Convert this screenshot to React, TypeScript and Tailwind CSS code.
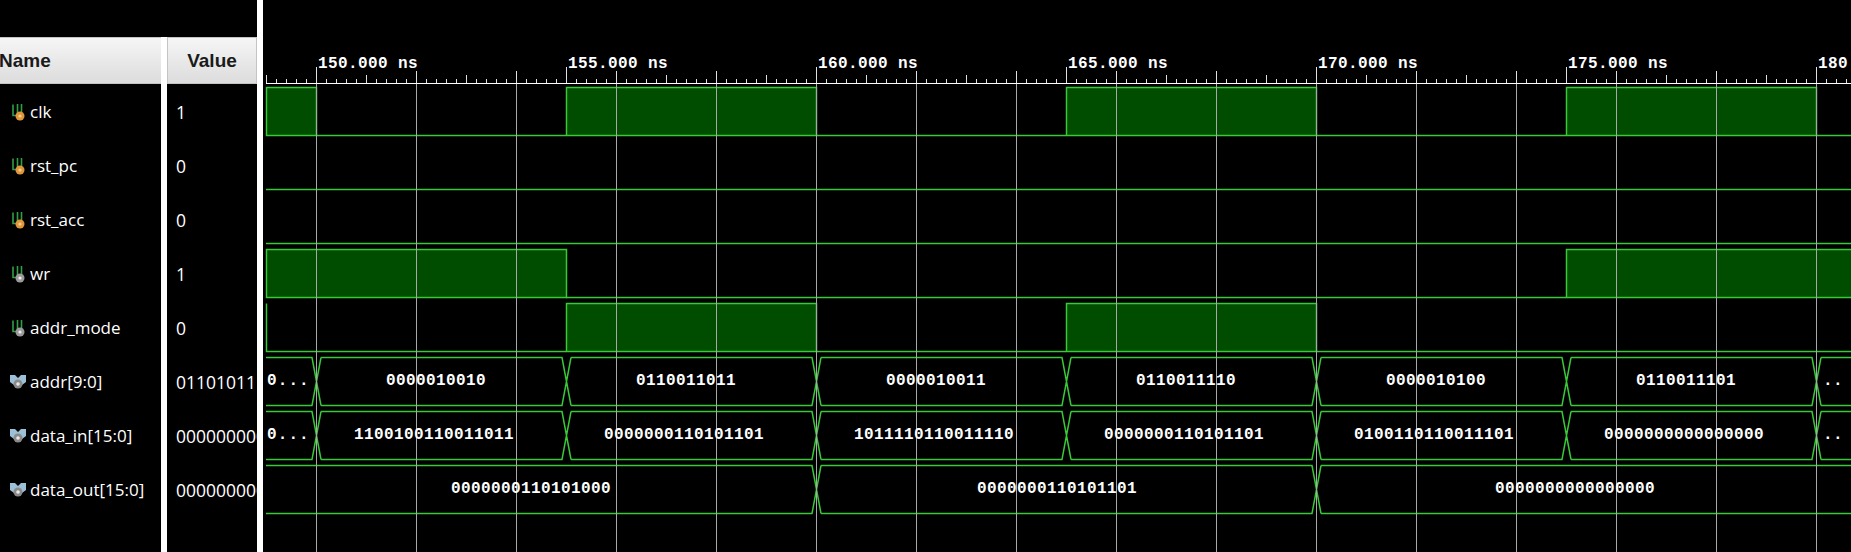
const BUS_COLOR = '#38c838'
const FILL = '#004d00'

type Sig = { name: string; value: string; kind: 'clk' | 'wire' | 'bus' }

const signals: Sig[] = [
  { name: 'clk', value: '1', kind: 'clk' },
  { name: 'rst_pc', value: '0', kind: 'clk' },
  { name: 'rst_acc', value: '0', kind: 'clk' },
  { name: 'wr', value: '1', kind: 'wire' },
  { name: 'addr_mode', value: '0', kind: 'wire' },
  { name: 'addr[9:0]', value: '011010111', kind: 'bus' },
  { name: 'data_in[15:0]', value: '000000000', kind: 'bus' },
  { name: 'data_out[15:0]', value: '000000000', kind: 'bus' },
]

const SignalIcon = ({ kind }: { kind: Sig['kind'] }) => {
  if (kind === 'bus') {
    return (
      <svg width="16" height="16" viewBox="0 0 16 16" className="shrink-0">
        <path d="M0 1h5l3 3 3-3h5v7l-4 3H4L0 8z" fill="#9cc0d8" />
        <circle cx="8" cy="10" r="4.5" fill="#8a8a8a" />
        <circle cx="8" cy="10" r="1.8" fill="#e8e8e8" />
      </svg>
    )
  }
  return (
    <svg width="16" height="18" viewBox="-1 0 16 18" className="shrink-0">
      <path d="M2 1.5v11h3.5M6.5 1v9M10.5 1v9" fill="none" stroke="#2f9f45" strokeWidth="1.6" />
      <circle cx="9" cy="13" r="4.5" fill={kind === 'clk' ? '#e0963a' : '#9a9a9a'} />
      <circle cx="9" cy="13" r="1.6" fill={kind === 'clk' ? '#f5d08a' : '#eeeeee'} />
    </svg>
  )
}

const high = (i: number) => 87.5 + 54 * i
const low = (i: number) => 135.5 + 54 * i

// filled pulses of one single-bit signal
const Pulse = ({ row, from, to }: { row: number; from: number; to: number }) => (
  <rect x={from + 0.5} y={high(row)} width={to - from} height={48} fill={FILL} stroke={BUS_COLOR} strokeWidth="1.5" />
)

const busEdges = (row: number, edges: number[]) => {
  const top = high(row)
  const bot = low(row)
  const d = 4.5
  let path = ''
  let prev = 266
  for (const edge of [...edges, 1860]) {
    const e = edge + 0.5
    path += `M${prev} ${top}H${e - d}L${e + d} ${bot}M${prev} ${bot}H${e - d}L${e + d} ${top}`
    prev = e + d
  }
  return path
}

const BusLabel = ({ x, row, text, anchor = 'middle', spacing = 0.4 }: { x: number; row: number; text: string; anchor?: 'middle' | 'start'; spacing?: number }) => (
  <text x={x} y={385 + 54 * (row - 5)} textAnchor={anchor} fill="#fff" fontSize="16" fontWeight="700" letterSpacing={spacing} fontFamily="'Liberation Mono', monospace">
    {text}
  </text>
)

const Waves = () => {
  const ticks: number[] = []
  for (let x = 266; x < 1851; x += 10) ticks.push(x)
  const grid = [316, 416, 516, 616, 716, 816, 916, 1016, 1116, 1216, 1316, 1416, 1516, 1616, 1716, 1816]
  const labels = [
    [316, '150.000 ns'],
    [566, '155.000 ns'],
    [816, '160.000 ns'],
    [1066, '165.000 ns'],
    [1316, '170.000 ns'],
    [1566, '175.000 ns'],
    [1816, '180.000 ns'],
  ] as const

  const tickHeight = (x: number) => {
    if ((x - 316) % 250 === 0) return 16
    if ((x - 316) % 100 === 0) return 12
    if ((x - 316) % 50 === 0) return 8
    return 4
  }

  const addr = ['0000010010', '0110011011', '0000010011', '0110011110', '0000010100', '0110011101']
  const dataIn = ['1100100110011011', '0000000110101101', '1011110110011110', '0000000110101101', '0100110110011101', '0000000000000000']

  return (
    <svg width="1588" height="552" viewBox="263 0 1588 552" className="block">
      {/* ruler */}
      <path d="M266 83.5H1851" stroke="#fff" strokeWidth="1" />
      {ticks.map((x) => (
        <path key={x} d={`M${x + 0.5} 83V${83 - tickHeight(x)}`} stroke="#e0e0e0" strokeWidth="1" />
      ))}
      {labels.map(([x, t]) => (
        <text key={x} x={x + 2} y="68" fill="#fff" fontSize="16" fontWeight="700" letterSpacing="0.4" fontFamily="'Liberation Mono', monospace">
          {t}
        </text>
      ))}

      {/* single bit signals */}
      <path d={`M316 ${low(0)}H566M816 ${low(0)}H1066M1316 ${low(0)}H1566M1816 ${low(0)}H1851`} stroke={BUS_COLOR} strokeWidth="1.5" />
      <Pulse row={0} from={266} to={316} />
      <Pulse row={0} from={566} to={816} />
      <Pulse row={0} from={1066} to={1316} />
      <Pulse row={0} from={1566} to={1816} />

      <path d={`M266 ${low(1)}H1851M266 ${low(2)}H1851`} stroke={BUS_COLOR} strokeWidth="1.5" />

      <path d={`M566 ${low(3)}H1566`} stroke={BUS_COLOR} strokeWidth="1.5" />
      <Pulse row={3} from={266} to={566} />
      <Pulse row={3} from={1566} to={1860} />

      <path d={`M266.5 ${high(4)}V${low(4)}H566M816 ${low(4)}H1066M1316 ${low(4)}H1851`} fill="none" stroke={BUS_COLOR} strokeWidth="1.5" />
      <Pulse row={4} from={566} to={816} />
      <Pulse row={4} from={1066} to={1316} />

      {/* buses */}
      <path d={busEdges(5, [316, 566, 816, 1066, 1316, 1566, 1816])} fill="none" stroke={BUS_COLOR} strokeWidth="1.5" />
      <path d={busEdges(6, [316, 566, 816, 1066, 1316, 1566, 1816])} fill="none" stroke={BUS_COLOR} strokeWidth="1.5" />
      <path d={busEdges(7, [816, 1316])} fill="none" stroke={BUS_COLOR} strokeWidth="1.5" />

      {/* cursor grid */}
      {grid.map((x) => (
        <path key={x} d={`M${x + 0.5} 84V552`} stroke="#a8a8a8" strokeWidth="1" />
      ))}

      <BusLabel x={267} row={5} text="0..." anchor="start" spacing={1.1} />
      <BusLabel x={267} row={6} text="0..." anchor="start" spacing={1.1} />
      {addr.map((t, i) => (
        <BusLabel key={i} x={436 + 250 * i} row={5} text={t} />
      ))}
      {dataIn.map((t, i) => (
        <BusLabel key={i} x={434 + 250 * i} row={6} text={t} />
      ))}
      <BusLabel x={1823} row={5} text=".." anchor="start" />
      <BusLabel x={1823} row={6} text=".." anchor="start" />
      <BusLabel x={531} row={7} text="0000000110101000" />
      <BusLabel x={1057} row={7} text="0000000110101101" />
      <BusLabel x={1575} row={7} text="0000000000000000" />
    </svg>
  )
}

export default function App() {
  return (
    <div className="flex h-[552px] w-[1851px] overflow-hidden bg-black font-['Open_Sans',sans-serif]">
      <div className="flex w-[257px] shrink-0 flex-col">
        <div className="h-[37px]" />
        <div className="flex flex-1">
          <div className="w-[161px] shrink-0">
            <div className="flex h-[47px] items-center border-y border-[#c4c4c4] bg-gradient-to-b from-[#f6f6f6] to-[#dcdcdc] pt-[2px] font-['Liberation_Sans',sans-serif] text-[19px] font-bold text-[#1a1a1a]">
              <span className="-ml-[1px]">Name</span>
            </div>
            {signals.map((s) => (
              <div key={s.name} className="flex h-[54px] items-center gap-[4px] pl-[10px] pt-[2px] text-[17px] text-white">
                <SignalIcon kind={s.kind} />
                <span className="whitespace-nowrap">{s.name}</span>
              </div>
            ))}
          </div>
          <div className="w-[6px] shrink-0 bg-white" />
          <div className="min-w-0 flex-1 overflow-hidden">
            <div className="flex h-[47px] items-center justify-center border border-[#c4c4c4] bg-gradient-to-b from-[#f6f6f6] to-[#dcdcdc] pt-[2px] font-['Liberation_Sans',sans-serif] text-[19px] font-bold text-[#1a1a1a]">
              Value
            </div>
            {signals.map((s) => (
              <div key={s.name} className="flex h-[54px] items-center whitespace-nowrap pl-[9px] pt-[2px] text-[17.5px] text-white">
                {s.value}
              </div>
            ))}
          </div>
        </div>
      </div>
      <div className="w-[6px] shrink-0 bg-white" />
      <Waves />
    </div>
  )
}
